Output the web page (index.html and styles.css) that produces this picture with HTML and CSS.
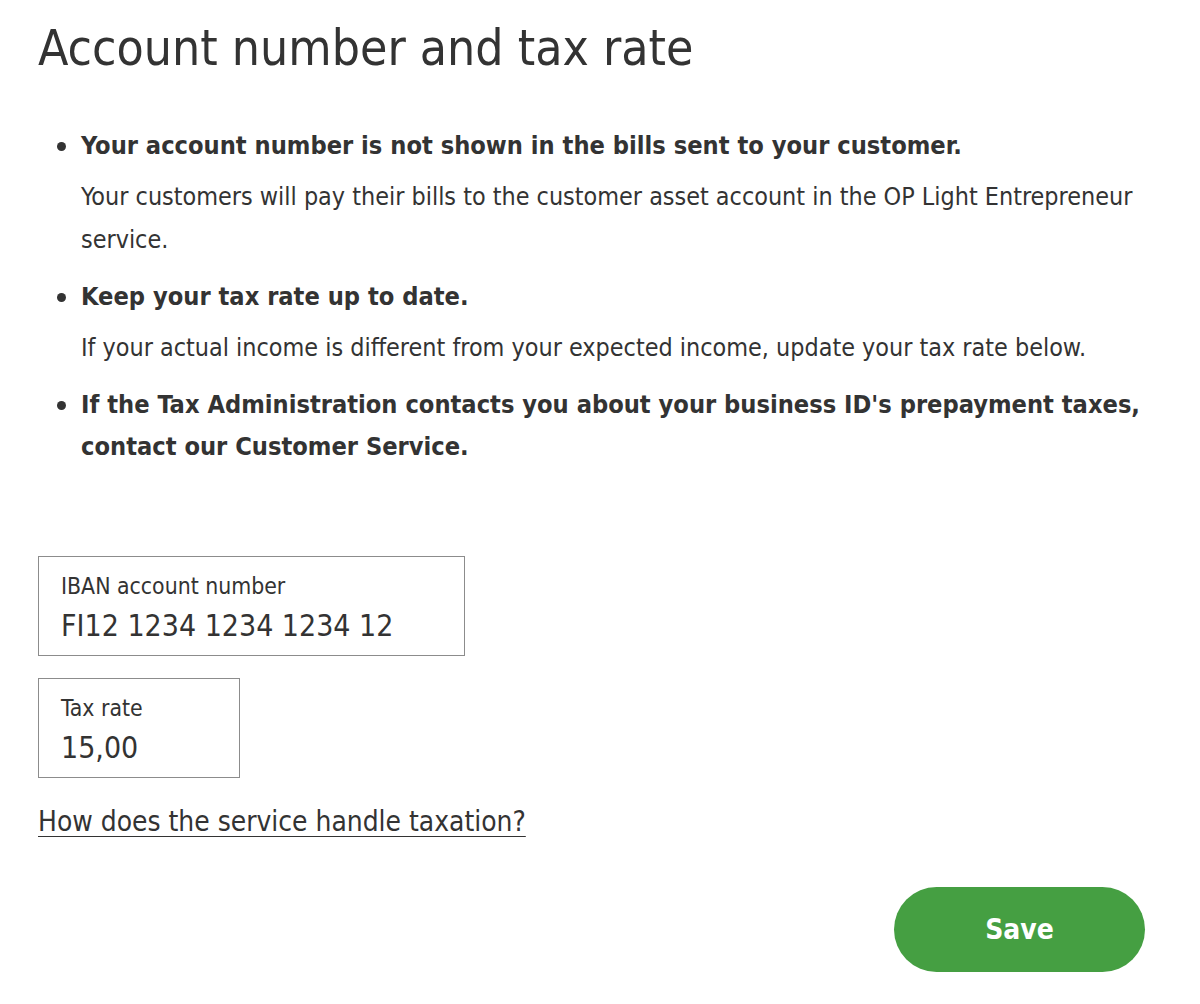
FILE: index.html
```html
<!DOCTYPE html>
<html lang="en">
<head>
  <meta charset="UTF-8" />
  <meta name="viewport" content="width=device-width, initial-scale=1.0"/>
  <title>Account number and tax rate</title>
  <link rel="stylesheet" href="styles.css">
</head>
<body>

  <div class="settings">
    <h1>Account number and tax rate</h1>

    <!-- Info about account and taxes -->
    <ul class="info-list">
      <li>
        <p class="info-title">Your account number is not shown in the bills sent to your customer.</p>
        <p class="info-text">Your customers will pay their bills to the customer asset account in the OP Light Entrepreneur service.</p>
      </li>
      <li>
        <p class="info-title">Keep your tax rate up to date.</p>
        <p class="info-text">If your actual income is different from your expected income, update your tax rate below.</p>
      </li>
      <li>
        <p class="info-title">If the Tax Administration contacts you about your business ID's prepayment taxes, contact our Customer Service.</p>
      </li>
    </ul>

    <!-- Fields -->
    <div class="fields">
      <label class="field field-iban">
        <span class="field-label">IBAN account number</span>
        <input type="text" value="FI12 1234 1234 1234 12" />
      </label>
      <label class="field field-tax">
        <span class="field-label">Tax rate</span>
        <input type="text" value="15,00" />
      </label>
    </div>

    <a class="help-link" href="#">How does the service handle taxation?</a>

    <div class="actions">
      <button class="save-btn">Save</button>
    </div>
  </div>

</body>
</html>
```

FILE: styles.css
```css
body {
  font-family: "DejaVu Sans Condensed", "DejaVu Sans", sans-serif;
  color: #333;
  background: white;
  margin: 0;
}

.settings {
  width: 1107px;
  padding: 0 0 0 38px;
}

h1 {
  font-size: 49.5px;
  font-weight: normal;
  line-height: 60px;
  margin: 18px 0 0;
}

.info-list {
  list-style: none;
  margin: 47px 0 0;
  padding: 0;
}

.info-list li {
  position: relative;
  padding-left: 43px;
  margin-top: 15px;
}

.info-list li:first-child {
  margin-top: 0;
}

.info-list li::before {
  content: "";
  position: absolute;
  left: 19px;
  top: 17px;
  width: 9px;
  height: 9px;
  border-radius: 50%;
  background: #333;
}

.info-title {
  font-size: 25.2px;
  font-weight: bold;
  line-height: 42px;
  margin: 0;
}

.info-text {
  font-size: 24.9px;
  line-height: 43px;
  margin: 8px 0 0;
}

.fields {
  display: flex;
  flex-direction: column;
  align-items: flex-start;
  gap: 22px;
  margin-top: 88px;
}

.field {
  display: flex;
  flex-direction: column;
  box-sizing: border-box;
  height: 100px;
  padding: 16px 22px 0;
  border: 1px solid #8c8c8c;
}

.field-iban {
  width: 427px;
}

.field-tax {
  width: 202px;
}

.field-label {
  font-size: 22.8px;
  line-height: 26px;
}

.field input {
  font-family: inherit;
  font-size: 30px;
  line-height: 36px;
  height: 36px;
  color: #333;
  border: none;
  padding: 0;
  margin-top: 9px;
  width: 100%;
  outline: none;
  background: transparent;
}

.help-link {
  display: inline-block;
  margin-top: 27px;
  font-size: 27.9px;
  line-height: 34px;
  color: #333;
  text-decoration: underline;
  text-decoration-thickness: 1px;
  text-underline-offset: 5px;
}

.actions {
  display: flex;
  justify-content: flex-end;
  margin-top: 48px;
}

.save-btn {
  width: 251px;
  height: 85px;
  border: none;
  border-radius: 43px;
  background: #459f42;
  color: white;
  font-family: inherit;
  font-size: 28px;
  font-weight: bold;
  cursor: pointer;
}
```
